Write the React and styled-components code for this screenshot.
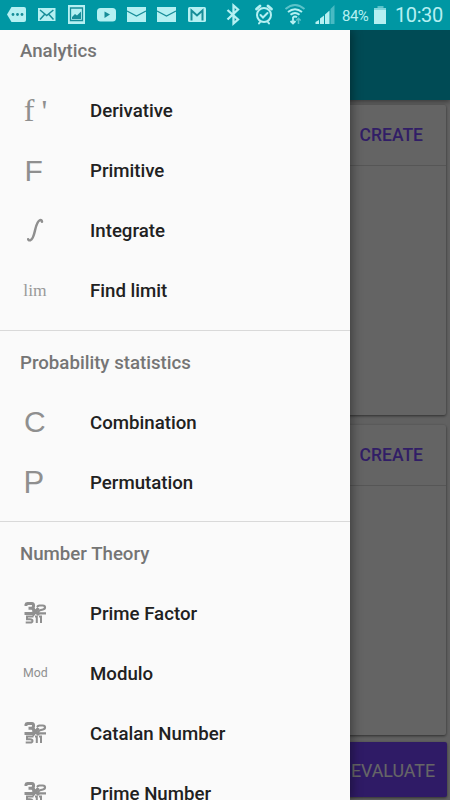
import React from 'react';
import styled, { createGlobalStyle } from 'styled-components';

const GlobalStyle = createGlobalStyle`
  * { box-sizing: border-box; }
  html, body { margin: 0; padding: 0; overflow: hidden; }
  body { font-family: Roboto, sans-serif; }
`;

const Screen = styled.div`
  width: 450px;
  height: 800px;
  display: grid;
  grid-template-rows: 30px 770px;
  overflow: hidden;
`;

const StatusBar = styled.header`
  display: flex;
  align-items: center;
  background: #0097a3;
  color: #b5f0f2;
`;

const StatusIcons = styled.svg`
  display: block;
  width: 342px;
  height: 30px;
  flex: none;
`;

const BatteryLevel = styled.span`
  width: 29px;
  padding-top: 1px;
  font-size: 15px;
  line-height: 30px;
  letter-spacing: -0.5px;
`;

const BatteryIcon = styled.svg`
  width: 13px;
  height: 18px;
  margin-left: 3px;
  flex: none;
`;

const Clock = styled.span`
  margin-left: 8px;
  padding-top: 1px;
  font-size: 20px;
  line-height: 31px;
  letter-spacing: -0.4px;
  white-space: nowrap;
`;

const Body = styled.div`
  position: relative;
  overflow: hidden;
`;

const Page = styled.main`
  height: 770px;
  display: flex;
  flex-direction: column;
  background: #f3f3f3;
`;

const Toolbar = styled.div`
  height: 70px;
  flex: none;
  background: #00bcd4;
  box-shadow: 0 2px 5px rgba(0, 0, 0, 0.4);
`;

const Card = styled.section`
  height: 310px;
  flex: none;
  margin: ${({ $first }) => ($first ? '5px' : '10px')} 4px 0;
  background: #fafafa;
  border-radius: 2px;
  box-shadow: 0 1px 3px rgba(0, 0, 0, 0.55);
`;

const CardHeader = styled.div`
  height: 61px;
  display: flex;
  align-items: center;
  justify-content: flex-end;
  padding-right: 23px;
  border-bottom: 1px solid #d8d8d8;
`;

const CreateButton = styled.button`
  border: 0;
  padding: 0;
  background: none;
  color: #7c4dff;
  font: 500 17.5px/24px Roboto, sans-serif;
`;

const EvaluateButton = styled.button`
  height: 55px;
  flex: none;
  margin: 7px 3px 0;
  padding: 3px 12px 0 0;
  border: 0;
  border-radius: 2px;
  background: #7744ff;
  color: #fff;
  font: 400 17.8px/52px Roboto, sans-serif;
  text-align: right;
  box-shadow: 0 1px 3px rgba(0, 0, 0, 0.5);
`;

const Scrim = styled.div`
  position: absolute;
  inset: 0;
  background: rgba(0, 0, 0, 0.6);
`;

const Drawer = styled.nav`
  position: absolute;
  top: 0;
  bottom: 0;
  left: 0;
  width: 350px;
  overflow: hidden;
  background: #fafafa;
  box-shadow: 2px 0 10px rgba(0, 0, 0, 0.4);
`;

const Group = styled.section`
  padding-bottom: 9px;

  & + & {
    border-top: 1px solid #d9d9d9;
    padding-top: 1px;
  }
`;

const GroupTitle = styled.h2`
  height: ${({ $clipped }) => ($clipped ? '51px' : '60px')};
  margin: 0;
  padding-left: 20px;
  color: #757575;
  font-size: 18.67px;
  font-weight: 500;
  line-height: ${({ $clipped }) => ($clipped ? '42px' : '62px')};
`;

const Item = styled.div`
  height: 60px;
  display: flex;
  align-items: center;
`;

const IconSlot = styled.div`
  width: 90px;
  padding-left: 20px;
  flex: none;
`;

const Glyph = styled.svg`
  display: block;
  width: 30px;
  height: 30px;
  overflow: visible;
  color: #8f8f8f;
`;

const ItemLabel = styled.span`
  padding-top: ${({ $raised }) => ($raised ? '0' : '1px')};
  color: #212121;
  font-size: 18.67px;
  font-weight: 500;
  line-height: 24px;
  white-space: nowrap;
`;

const glyphs = {
  derivative: (
    <g fill="currentColor" fontFamily="Liberation Serif, serif" fontSize="32">
      <text x="3.8" y="25">f</text>
      <text x="21.500" y="25.500">'</text>
    </g>
  ),
  primitive: (
    <text x="4.500" y="25" fill="currentColor" fontFamily="Liberation Sans, sans-serif" fontSize="30">F</text>
  ),
  integral: (
    <path d="M8.200 23.300q.5 1.500 2.300.9c2.700-1 3.500-5.500 4.600-10.200S17.300 5.200 20 4.200q1.700-.5 2 1.600" fill="none" stroke="currentColor" strokeWidth="2.500" strokeLinecap="round" />
  ),
  limit: (
    <text x="3.300" y="20.300" fill="#999" fontFamily="Liberation Serif, serif" fontSize="17.500">lim</text>
  ),
  combination: (
    <text x="4" y="25.200" fill="currentColor" fontFamily="Liberation Sans, sans-serif" fontSize="30">C</text>
  ),
  permutation: (
    <text x="3.500" y="25.600" fill="currentColor" fontFamily="Liberation Sans, sans-serif" fontSize="31">P</text>
  ),
  modulo: (
    <text x="3" y="19" fill="currentColor" fontFamily="Roboto, sans-serif" fontSize="12.300">Mod</text>
  ),
  numbers: (
    <g fill="none" stroke="currentColor">
      <path d="M6 8V6.500q.2-1 1.500-1h4.300q1.800.2 1.800 2.200t-2 2.500H8.500 12q2 .7 2 2.800t-2.500 2.500H4.500" strokeWidth="3" />
      <path d="M17.500 9q0-1.500 2-1.500h3.300q2.200 0 2.200 1.800t-2 2.200l-3 .8q-2 .6-2.200 3H26" strokeWidth="2.200" />
      <path d="m12.500 10.500 6.500 6.500m-.5-7-6 7.500" strokeWidth="3" />
      <path d="M13.500 18.500H7v2.700h3q2.500 0 2.500 1.700T10 24.500H5.700M15 18.500h1.800V25m2.200-6.500h2V25" strokeWidth="2" />
    </g>
  ),
};

const groups = [
  {
    title: 'Analytics',
    clipped: true,
    items: [
      ['derivative', 'Derivative'],
      ['primitive', 'Primitive'],
      ['integral', 'Integrate'],
      ['limit', 'Find limit'],
    ],
  },
  {
    title: 'Probability statistics',
    items: [
      ['combination', 'Combination'],
      ['permutation', 'Permutation'],
    ],
  },
  {
    title: 'Number Theory',
    items: [
      ['numbers', 'Prime Factor'],
      ['modulo', 'Modulo'],
      ['numbers', 'Catalan Number'],
      ['numbers', 'Prime Number'],
    ],
  },
];

function Envelope({ x }) {
  return (
    <g transform={`translate(${x} 7)`}>
      <path d="M0 0h19v15H0z" fill="currentColor" />
      <path d="m0 4 9.500 5L19 4" fill="none" stroke="#168d98" strokeWidth="1.300" />
    </g>
  );
}

function Notifications() {
  const bar = '#168d98';
  return (
    <StatusIcons viewBox="0 0 342 30">
      <path d="M11.500 7H24q2 0 2 2v11q0 2-2 2H11.500L7 14.500z" fill="currentColor" />
      <g fill={bar}>
        <circle cx="13" cy="14.500" r="1.400" />
        <circle cx="17.500" cy="14.500" r="1.400" />
        <circle cx="22" cy="14.500" r="1.400" />
      </g>
      <path d="M38 8h17.500v13H38z" fill="currentColor" />
      <path d="m40 10 6.700 5.500 6.700-5.500M40 19.500l4.500-5m9 5-4.500-5" fill="none" stroke={bar} strokeWidth="1.500" />
      <path d="M68 5h17v19H68z" fill="currentColor" />
      <path d="M70.500 8h12v12.500h-12z" fill="none" stroke={bar} strokeWidth="1.300" />
      <path d="M72 19v-2l3-3 2 1.500 4-4V19z" fill={bar} />
      <rect x="97" y="8" width="19" height="13.500" rx="3.500" fill="currentColor" />
      <path d="m104.500 11.500 5.500 3-5.500 3.500z" fill={bar} />
      <Envelope x={127} />
      <Envelope x={157} />
      <rect x="188" y="7" width="18" height="15" rx="1.500" fill="currentColor" />
      <path d="M191.500 20.500V10.500l5.500 5 5.500-5v10" fill="none" stroke={bar} strokeWidth="2" />
      <path d="m227.500 10 10.500 9.500-4.500 4V5.500l4.500 4-10.500 10" fill="none" stroke="currentColor" strokeWidth="2.300" />
      <g fill="none" stroke="currentColor" strokeWidth="2" strokeLinecap="round">
        <circle cx="264" cy="15" r="7" />
        <path d="m260.500 15 2.500 2.500 4.500-4.500M260 22l-1 1.500m9-1.500 1 1.500" />
        <path d="m256.500 9 3.500-3m8 0 3.500 3" strokeWidth="2.800" />
      </g>
      <g fill="none" stroke="currentColor" strokeWidth="2">
        <path d="M285.500 9q9.500-8 19 0" opacity=".5" />
        <path d="M288 12q7-5.500 14 0M290.500 14.800q4.500-3.500 9 0M293 17.200q2-1.400 4 0" />
        <path d="M293 17v6m-2.500-2 2.500 2.500 2.500-2.500" strokeWidth="1.800" />
        <path d="M298.500 24v-6m-2.200 2.500 2.200-2.200 2.200 2.200" strokeWidth="1.500" opacity=".5" />
      </g>
      <g fill="currentColor">
        <path d="M315.500 24v-2l3.500-2v4zM320 24v-5.500l4-3V24zM325 24v-9.500l4.500-4V24z" />
        <path d="M330.500 24V9l4-4v19z" opacity=".4" />
      </g>
    </StatusIcons>
  );
}

function InputCard({ first }) {
  return (
    <Card $first={first}>
      <CardHeader>
        <CreateButton>CREATE</CreateButton>
      </CardHeader>
    </Card>
  );
}

export default function App() {
  return (
    <>
      <GlobalStyle />
      <Screen>
        <StatusBar>
          <Notifications />
          <BatteryLevel>84%</BatteryLevel>
          <BatteryIcon viewBox="0 0 13 18">
            <path d="M3.500 0h6v2h-6z" fill="currentColor" opacity=".5" />
            <path d="M0 2h12v2H0z" fill="currentColor" opacity=".7" />
            <path d="M0 4h12v14H0z" fill="currentColor" />
          </BatteryIcon>
          <Clock>10:30</Clock>
        </StatusBar>
        <Body>
          <Page>
            <Toolbar />
            <InputCard first />
            <InputCard />
            <EvaluateButton>EVALUATE</EvaluateButton>
          </Page>
          <Scrim />
          <Drawer>
            {groups.map((group) => (
              <Group key={group.title}>
                <GroupTitle $clipped={group.clipped}>{group.title}</GroupTitle>
                {group.items.map(([icon, label]) => (
                  <Item key={label}>
                    <IconSlot>
                      <Glyph viewBox="0 0 30 30">{glyphs[icon]}</Glyph>
                    </IconSlot>
                    <ItemLabel $raised={group.clipped}>{label}</ItemLabel>
                  </Item>
                ))}
              </Group>
            ))}
          </Drawer>
        </Body>
      </Screen>
    </>
  );
}
